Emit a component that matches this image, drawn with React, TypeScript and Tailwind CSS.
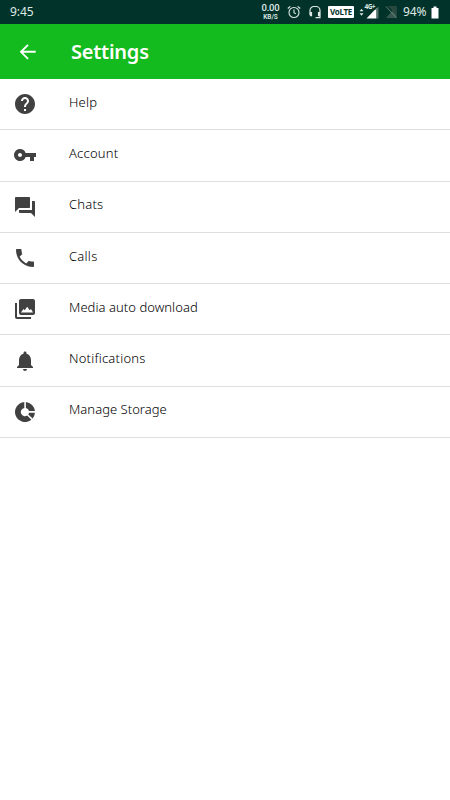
import React from 'react';
import { MdForum, MdHelp, MdNotifications, MdPhone, MdVpnKey } from 'react-icons/md';

interface SettingsItem {
  label: string;
  icon: React.ReactNode;
  textClass: string;
}

const PhotosIcon = () => (
  <svg viewBox="0 0 24 24" className="w-6 h-6" fill="currentColor">
    <path d="M2 6v14c0 1.1.9 2 2 2h14v-2H4V6z" />
    <path
      fillRule="evenodd"
      d="M8 2h12c1.1 0 2 .9 2 2v12c0 1.1-.9 2-2 2H8c-1.1 0-2-.9-2-2V4c0-1.1.9-2 2-2zm0 13.5h12l-2-3.5-1.3 1.2-2.5-3.4-2.5 3.4-1.3-1.2z"
    />
  </svg>
);

const StorageIcon = () => (
  <svg viewBox="0 0 24 24" className="w-6 h-6" fill="currentColor">
    <path d="M11.3 2.03A10 10 0 1 0 18.4 19.7L14.2 15.43A4.1 4.1 0 1 1 11.3 7.96z" />
    <path d="M12.9 2.04A10 10 0 0 1 21.95 11.1H16A4.1 4.1 0 0 0 12.9 8z" />
    <path d="M16 12.8H21.95A10 10 0 0 1 19.6 18.5L15.3 14.4A4.1 4.1 0 0 0 16 12.8z" />
  </svg>
);

const items: SettingsItem[] = [
  { label: 'Help', icon: <MdHelp size={24} />, textClass: 'tracking-[0.2px]' },
  { label: 'Account', icon: <MdVpnKey size={24} />, textClass: 'tracking-[0.22px]' },
  { label: 'Chats', icon: <MdForum size={24} />, textClass: 'tracking-[0.2px]' },
  { label: 'Calls', icon: <MdPhone size={24} />, textClass: 'tracking-[0.25px]' },
  { label: 'Media auto download', icon: <PhotosIcon />, textClass: 'tracking-[0.05px]' },
  { label: 'Notifications', icon: <MdNotifications size={24} />, textClass: 'tracking-[0.22px]' },
  { label: 'Manage Storage', icon: <StorageIcon />, textClass: 'tracking-[0.03px]' },
];

const StatusBar = () => (
  <div className="flex h-6 items-center bg-[#02332b] pl-[10px] text-[#dfe9e6]">
    <span className="w-[251px] shrink-0 text-[12px] leading-none tracking-[-0.1px]">9:45</span>
    {/* Network speed */}
    <div className="flex w-[19px] shrink-0 flex-col items-center font-['Roboto',sans-serif]">
      <span className="text-[9.5px] font-medium leading-[11px] tracking-[-0.2px]">0.00</span>
      <span className="text-[6.5px] font-semibold leading-[9px]">KB/S</span>
    </div>
    {/* Alarm */}
    <svg viewBox="0 0 14 14" className="ml-[7px] w-[14px] h-[14px] shrink-0" fill="none" stroke="currentColor" strokeWidth="1.1">
      <circle cx="7" cy="7.5" r="5" />
      <path d="M7 4.5v3.2l2 1.2M.8 3.5l2.5-2.2M13.2 3.5l-2.5-2.2" />
    </svg>
    {/* Headset */}
    <svg viewBox="0 0 14 14" className="ml-[7px] w-[14px] h-[14px] shrink-0" fill="none" stroke="currentColor">
      <path d="M2 10V5.5a4 4 0 0 1 4-4h2a4 4 0 0 1 4 4v7.2H7.5" strokeWidth="1.2" />
      <path d="M3 7v4.2M11 7v4.2" strokeWidth="2.2" />
    </svg>
    <span className="ml-[6px] flex h-3 w-[26px] shrink-0 items-center justify-center rounded-[1px] bg-white text-[8px] font-bold leading-none tracking-[-0.3px] text-[#02332b]">
      VoLTE
    </span>
    {/* Mobile signal */}
    <svg viewBox="0 0 22 18" className="ml-[5px] w-[22px] h-[18px] shrink-0" fill="currentColor">
      <path d="M0.5 8.3l2-2.5 2 2.5zM0.5 10.2l2 2.5 2-2.5z" />
      <path d="M17.5 5v10.5H7.5z" fill="#fff" />
      <path d="M17.5 5.5l2-2v12h-2z" fill="#56756d" />
      <path d="M5 0h12v6.5H5z" fill="#02332b" />
      <text x="5.5" y="6" fontSize="6.5" fontWeight="700" textLength="11">4G+</text>
    </svg>
    {/* Empty SIM slot */}
    <svg viewBox="0 0 12 14" className="ml-1 w-3 h-[14px] shrink-0">
      <path d="M11.5 1v12H1z" fill="#36584f" />
      <path d="M3 1h8.5v9z" fill="#29493f" />
      <path d="M1 1.5l10.5 11.5" stroke="#6b837c" />
    </svg>
    <span className="ml-[6px] w-[25px] shrink-0 text-[12px] leading-none tracking-[-0.1px]">94%</span>
    <svg viewBox="0 0 8 13" className="ml-[3px] w-2 h-[13px] shrink-0" fill="#fff">
      <path d="M2.5 .5h3V2h2v10.5h-7V2h2z" />
    </svg>
  </div>
);

export default function App() {
  return (
    <div className="min-h-screen w-full bg-white font-['Noto_Sans','Open_Sans',sans-serif]">
      <StatusBar />
      <header className="flex h-[55px] items-center bg-[#14bb1e] pl-[19px] text-white">
        <svg viewBox="0 0 18 18" className="w-[18px] h-[18px]" fill="none" stroke="currentColor" strokeWidth="1.9">
          <path d="M16.7 8.8H2.2M9 1.8L2 8.8l7 7" />
        </svg>
        <h1 className="ml-[34px] text-[20px] font-semibold leading-none tracking-[-0.25px]">Settings</h1>
      </header>
      <ul className="text-black">
        {items.map((item) => (
          <li key={item.label} className="flex h-[51.3px] items-center border-b border-[#dedede] pl-[13px]">
            <span className="flex w-6 shrink-0 text-[#414141]">{item.icon}</span>
            <span className={`mb-[5px] ml-8 text-[13px] font-[350] leading-5 ${item.textClass}`}>{item.label}</span>
          </li>
        ))}
      </ul>
    </div>
  );
}
